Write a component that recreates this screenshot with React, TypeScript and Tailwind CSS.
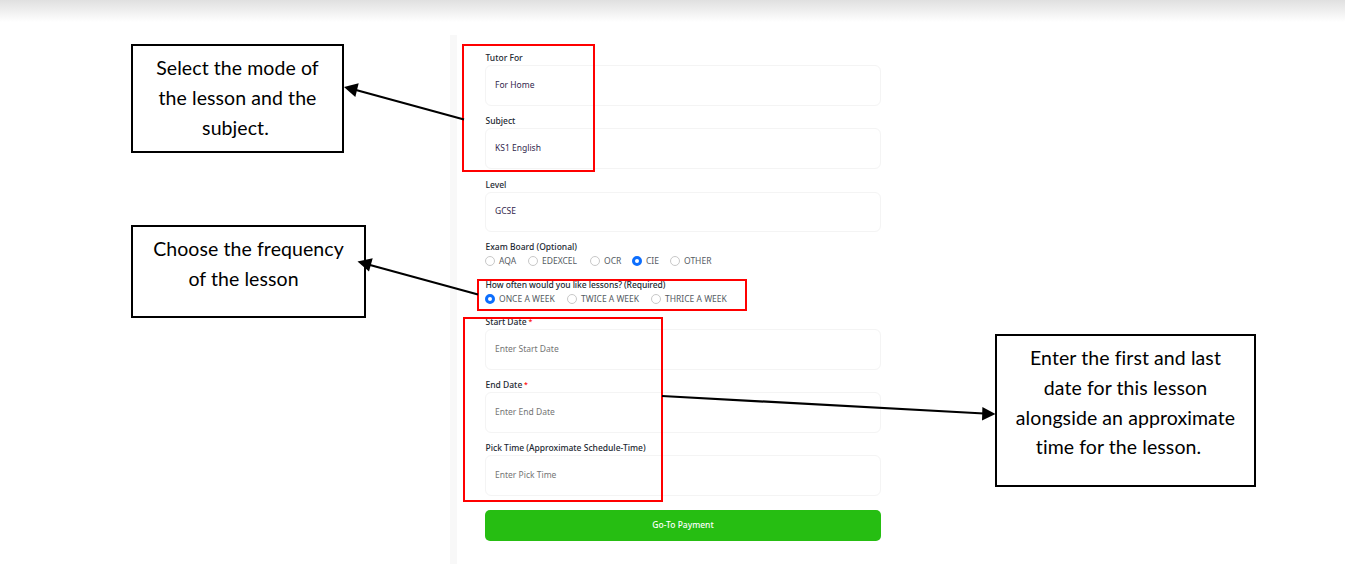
import type { ReactNode } from "react";

const labelClass = "block h-[14px] whitespace-nowrap pl-[0.5px] text-[8.5px] leading-[14px] font-medium text-[#222831]";

function Field({ label, value, placeholder, required, short }: { label: string; value?: string; placeholder?: string; required?: boolean; short?: boolean }) {
  return (
    <div className="h-[63px]">
      <div className={labelClass}>
        {label}
        {required && <span className="relative -top-px text-[7px] text-[#f00]"> *</span>}
      </div>
      <div
        className={`flex items-center rounded-[6px] border border-[#f4f4f4] px-[9px] text-[8.5px] ${short ? "h-[40px] pb-px" : "h-[41px]"}`}
      >
        {value ? <span className="text-[#32274d]">{value}</span> : <span className="text-[#757575]">{placeholder}</span>}
      </div>
    </div>
  );
}

function Radio({ label, checked, className }: { label: string; checked?: boolean; className: string }) {
  return (
    <div className={`flex h-[14px] shrink-0 items-center gap-[4px] ${className}`}>
      <span
        className={
          checked
            ? "size-[10px] shrink-0 rounded-full border-[3px] border-[#0d6efd] bg-white"
            : "size-[10px] shrink-0 rounded-full border border-[#c8c8c8] bg-white"
        }
      />
      <span className="h-[14px] text-[8.5px] leading-[13px] whitespace-nowrap text-[#555b63]">{label}</span>
    </div>
  );
}

function Line({ children, className = "" }: { children: ReactNode; className?: string }) {
  return <div className={`whitespace-nowrap ${className}`}>{children}</div>;
}

const calloutClass =
  "absolute flex flex-col items-center border-2 border-black bg-white font-['Lato',sans-serif] text-[19.5px] leading-[29.8px] tracking-[0.08px] text-black [font-variant-ligatures:none]";

export default function App() {
  return (
    <main className="relative h-[571px] w-full overflow-hidden bg-white font-['Noto_Sans',sans-serif]">
      <div className="h-[35px] bg-linear-to-b from-[#e0e0e0] from-0% to-white to-[22px]" />

      <div className="flex h-[529px] pl-[450px]">
        <div className="w-[7px] shrink-0 bg-[#f8f8f8]" />
        <form className="ml-[28px] w-[396px] pt-[16px]">
          <Field label="Tutor For" value="For Home" />
          <Field label="Subject" value="KS1 English" />
          <div className="h-[63px] pt-px">
            <Field label="Level" value="GCSE" short />
          </div>
          <div className="h-[38px]">
            <div className={labelClass}>Exam Board (Optional)</div>
            <div className="flex">
              <Radio label="AQA" className="w-[43px]" />
              <Radio label="EDEXCEL" className="w-[62px]" />
              <Radio label="OCR" className="w-[42px]" />
              <Radio label="CIE" checked className="w-[38px]" />
              <Radio label="OTHER" className="w-[48px]" />
            </div>
          </div>
          <div className="h-[37px]">
            <div className={`${labelClass} tracking-[-0.08px]`}>How often would you like lessons? (Required)</div>
            <div className="flex">
              <Radio label="ONCE A WEEK" checked className="w-[82px]" />
              <Radio label="TWICE A WEEK" className="w-[84px]" />
              <Radio label="THRICE A WEEK" className="w-[82px]" />
            </div>
          </div>
          <Field label="Start Date" placeholder="Enter Start Date" required />
          <Field label="End Date" placeholder="Enter End Date" required />
          <Field label="Pick Time (Approximate Schedule-Time)" placeholder="Enter Pick Time" />
          <button
            type="button"
            className="mt-[6px] flex h-[31px] w-full items-center justify-center rounded-[5px] bg-[#26be12] text-[8.5px] font-medium text-white"
          >
            Go-To Payment
          </button>
        </form>
      </div>

      <div className="absolute top-[44px] left-[462px] h-[128px] w-[133px] border-2 border-[#f00]" />
      <div className="absolute top-[279px] left-[477px] h-[32px] w-[270px] border-2 border-[#f00]" />
      <div className="absolute top-[317px] left-[463px] h-[185px] w-[200px] border-2 border-[#f00]" />

      <div className={`${calloutClass} top-[44px] left-[131px] h-[109px] w-[213px] pt-[7px]`}>
        <Line>Select the mode of</Line>
        <Line>the lesson and the</Line>
        <Line className="pr-1">subject.</Line>
      </div>
      <div className={`${calloutClass} top-[225px] left-[131px] h-[93px] w-[235px] pt-[7px]`}>
        <Line>Choose the frequency</Line>
        <Line className="pr-[10px]">of the lesson</Line>
      </div>
      <div className={`${calloutClass} top-[334px] left-[995px] h-[153px] w-[261px] pt-[7px]`}>
        <Line>Enter the first and last</Line>
        <Line>date for this lesson</Line>
        <Line>alongside an approximate</Line>
        <Line className="pr-[14px]">time for the lesson.</Line>
      </div>

      <svg className="pointer-events-none absolute inset-0" width="1345" height="571" viewBox="0 0 1345 571" fill="none">
        <g stroke="#000" strokeWidth="2.2">
          <path d="M464 119.5 356 90" />
          <path d="M478 294.5 370 265" />
          <path d="M662 396 984 413.5" />
        </g>
        <g fill="#000">
          <path d="M344 87 358.7 83.3 355.3 97Z" />
          <path d="M357.5 261.5 372.7 258.3 369 271.5Z" />
          <path d="M995.5 414 982 420.5 982.4 407Z" />
        </g>
      </svg>
    </main>
  );
}
